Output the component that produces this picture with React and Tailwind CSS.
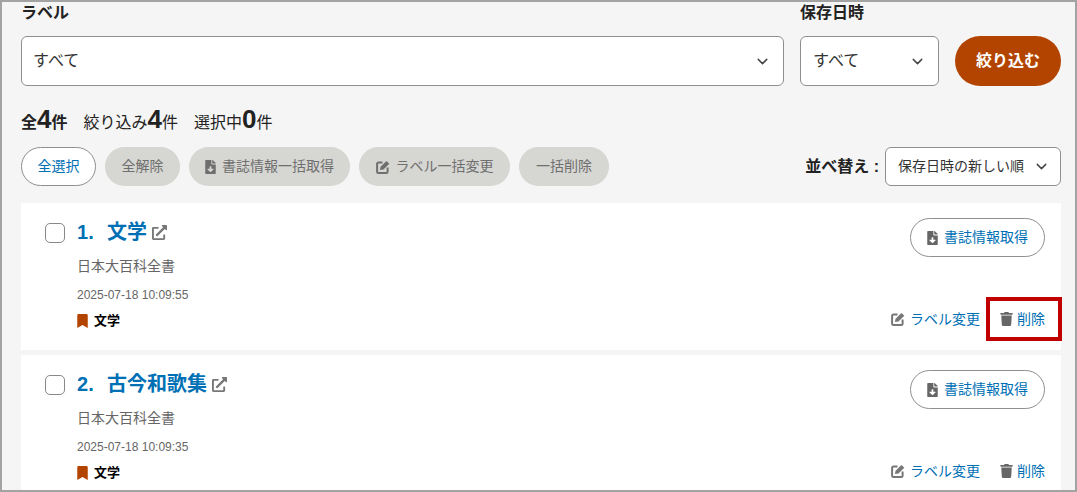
import { ChevronDown } from "lucide-react";
import { FaBookmark, FaExternalLinkAlt, FaFileDownload, FaTrash } from "react-icons/fa";

const font = "font-['Liberation_Sans','Noto_Sans_CJK_JP',sans-serif]";

function EditIcon({ className }) {
    return (
        <svg viewBox="0 0 14 14" className={`w-[14px] h-[14px] ${className}`}>
            <path d="M6.5 2.5H2.6a1.5 1.5 0 0 0-1.5 1.5v7.5a1.5 1.5 0 0 0 1.5 1.5h7.5a1.5 1.5 0 0 0 1.5-1.5V7.5" fill="none" stroke="currentColor" strokeWidth="2" />
            <path d="M3.9 10.1l.7-3.4L10.4.9l2.9 2.9-5.8 5.6z" fill="currentColor" />
        </svg>
    );
}

function SelectBox({ value, className }) {
    return (
        <div className={`flex items-center justify-between bg-white border border-[#8f8f8f] rounded-md text-[#333] ${className}`}>
            <span>{value}</span>
            <ChevronDown size={17} strokeWidth={2} className="text-[#444]" />
        </div>
    );
}

function ToolButton({ children, className }) {
    return (
        <button className={`h-[39px] rounded-full bg-[#d6d6d2] text-[#6f6f6f] text-[14px] flex items-center justify-center gap-[6px] ${className}`}>
            {children}
        </button>
    );
}

function ItemCard({ no, title, date, highlight }) {
    return (
        <div className="relative bg-white h-[147px] flex pl-6 pr-4 pt-[15px]">
            <div className="w-5 h-5 mt-[5px] bg-white border border-[#888] rounded-[5px] shrink-0"></div>
            <div className="ml-3 flex-1">
                <div className="flex items-center h-[28px] text-[20px] font-bold text-[#0070b5]">
                    <span className="w-[30px]">{no}.</span>
                    <span>{title}</span>
                    <FaExternalLinkAlt size={15} className="ml-[5px] text-[#777]" />
                </div>
                <div className="mt-[10px] text-[14px] leading-5 text-[#666]">日本大百科全書</div>
                <div className="mt-[9px] text-[12px] leading-5 text-[#666]">{date}</div>
                <div className="mt-[6px] flex items-center gap-[6px] text-[13px] leading-5 font-bold text-black">
                    <FaBookmark className="w-[11px] h-[14px] text-[#b34400]" />
                    <span>文学</span>
                </div>
            </div>
            <div className="flex flex-col items-end justify-between pb-[21px]">
                <button className="w-[135px] h-[39px] bg-white border border-[#8f8f8f] rounded-full flex items-center justify-center gap-[6px] text-[14px] text-[#0070b5]">
                    <FaFileDownload className="w-[11px] h-[14px] text-[#666]" />
                    <span>書誌情報取得</span>
                </button>
                <div className="flex items-center text-[14px] leading-5 text-[#0070b5]">
                    <EditIcon className="text-[#777] mr-[5px]" />
                    <span>ラベル変更</span>
                    <FaTrash className="w-[13px] h-[14px] text-[#666] ml-5 mr-[4px]" />
                    <span>削除</span>
                </div>
            </div>
            {highlight && <div className="absolute right-[-1px] bottom-[9px] w-[76px] h-[44px] border-[4px] border-[#c00000]"></div>}
        </div>
    );
}

export default function App() {
    return (
        <div className={`h-[492px] overflow-hidden border-2 border-[#a3a3a3] bg-[#f5f5f5] pl-[19px] pr-[14px] ${font}`}>
            <div className="flex gap-4 items-end">
                <div className="flex-1">
                    <div className="pt-px text-[16px] leading-5 font-bold text-[#222]">ラベル</div>
                    <SelectBox value="すべて" className="mt-[13px] h-[50px] pl-[11px] pr-3 text-[16px]" />
                </div>
                <div className="w-[139px]">
                    <div className="pt-px text-[16px] leading-5 font-bold text-[#222]">保存日時</div>
                    <SelectBox value="すべて" className="mt-[13px] h-[50px] pl-3 pr-3 text-[16px]" />
                </div>
                <button className="w-[106px] h-[50px] rounded-full bg-[#b34400] text-white text-[16px] font-bold">絞り込む</button>
            </div>

            <div className="mt-[20px] h-[26px] flex items-center gap-4 text-[16px] text-[#222]">
                <span className="font-bold">全<span className="text-[26px]">4</span>件</span>
                <span>絞り込み<span className="text-[26px] font-bold">4</span>件</span>
                <span>選択中<span className="text-[26px] font-bold">0</span>件</span>
            </div>

            <div className="mt-[15px] flex items-center gap-[9px]">
                <button className="w-[75px] h-[39px] rounded-full bg-white border border-[#8f8f8f] text-[14px] text-[#0070b5]">全選択</button>
                <ToolButton className="w-[75px]">全解除</ToolButton>
                <ToolButton className="w-[161px]"><FaFileDownload className="w-[11px] h-[14px]" />書誌情報一括取得</ToolButton>
                <ToolButton className="w-[151px]"><EditIcon />ラベル一括変更</ToolButton>
                <ToolButton className="w-[90px]">一括削除</ToolButton>
                <div className="ml-auto flex items-center gap-[6px]">
                    <span className="text-[16px] font-bold text-[#222]">並べ替え :</span>
                    <SelectBox value="保存日時の新しい順" className="w-[176px] h-[39px] pl-3 pr-[10px] text-[14px]" />
                </div>
            </div>

            <div className="mt-[17px] flex flex-col gap-[5px]">
                <ItemCard no={1} title="文学" date="2025-07-18 10:09:55" highlight />
                <ItemCard no={2} title="古今和歌集" date="2025-07-18 10:09:35" />
            </div>
        </div>
    );
}
